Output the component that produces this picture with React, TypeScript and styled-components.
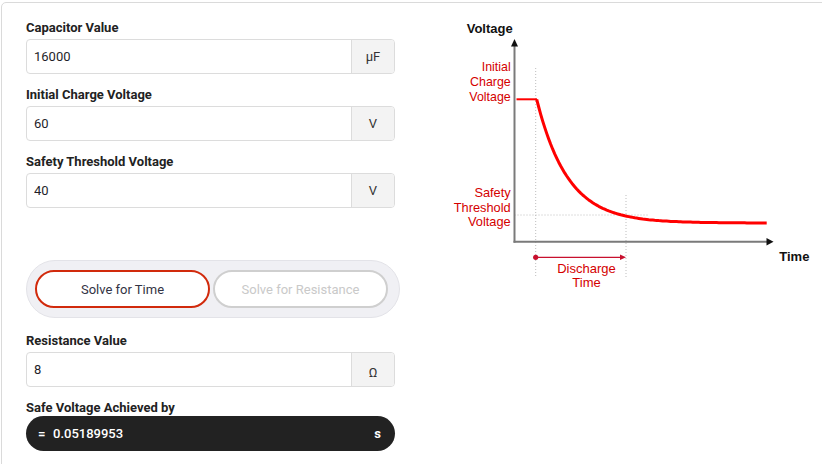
import React from "react";
import styled, { createGlobalStyle } from "styled-components";

const Global = createGlobalStyle`
  html, body {
    margin: 0;
    padding: 0;
    background: #ffffff;
    overflow: hidden;
  }
  * { box-sizing: border-box; }
`;

const Page = styled.div`
  padding: 2px 0 0 1px;
  width: 822px;
  height: 464px;
  overflow: hidden;
`;

const Card = styled.div`
  width: 1000px;
  min-height: 600px;
  border: 1px solid #dadada;
  border-radius: 5px;
  padding: 17px 0 0 24px;
  display: flex;
  align-items: flex-start;
  font-family: Roboto, "Liberation Sans", sans-serif;
  color: #222;
`;

const LeftColumn = styled.div`
  width: 369px;
  display: flex;
  flex-direction: column;
`;

const Field = styled.div<{ $mt?: number }>`
  display: flex;
  flex-direction: column;
  margin-top: ${(p) => p.$mt ?? 0}px;
`;

const Label = styled.label<{ $mb?: number }>`
  font-size: 13px;
  font-weight: 700;
  line-height: 16px;
  color: #222;
  margin-bottom: ${(p) => p.$mb ?? 3}px;
`;

const InputGroup = styled.div`
  display: flex;
  height: 35px;
  border: 1px solid #dcdcdc;
  border-radius: 4px;
  overflow: hidden;
  background: #fff;
`;

const ValueInput = styled.input`
  flex: 1;
  min-width: 0;
  border: none;
  outline: none;
  padding: 0 7px;
  font-family: Roboto, "Liberation Sans", sans-serif;
  font-size: 13px;
  color: #1f1f2a;
  background: transparent;
`;

const Unit = styled.div<{ $dy?: number }>`
  width: 43px;
  display: flex;
  align-items: center;
  justify-content: center;
  background: #f3f3f3;
  border-left: 1px solid #dcdcdc;
  font-size: 13px;
  color: #333;
  padding-top: ${(p) => p.$dy ?? 0}px;
`;

const Toggle = styled.div`
  width: 374px;
  height: 58px;
  margin-top: 52px;
  border: 1px solid #e3e3e8;
  border-radius: 29px;
  background: #f0f0f4;
  display: flex;
  align-items: center;
  gap: 3px;
  padding: 0 11px 0 8px;
`;

const ToggleButton = styled.button<{ $active?: boolean }>`
  flex: 1;
  height: 38px;
  border-radius: 19px;
  background: #fff;
  border: 2px solid ${(p) => (p.$active ? "#d12a0c" : "#cfcfcf")};
  color: ${(p) => (p.$active ? "#333344" : "#c9c9c9")};
  font-family: Roboto, "Liberation Sans", sans-serif;
  font-size: 13px;
  cursor: pointer;
  padding: 0;
`;

const Result = styled.div`
  height: 35px;
  border-radius: 18px;
  background: #222222;
  color: #fff;
  display: flex;
  align-items: center;
  padding: 0 14px 0 12px;
  font-size: 13px;
`;

const Equals = styled.span`
  font-weight: 700;
  width: 15px;
`;

const ResultValue = styled.span`
  flex: 1;
  font-weight: 500;
`;

const ResultUnit = styled.span`
  font-weight: 700;
`;

const ChartBox = styled.div`
  margin-left: 45px;
  width: 382px;
  height: 280px;
`;

const ChartSvg = styled.svg`
  display: block;
  font-family: "Liberation Sans", Arial, sans-serif;
`;

function curvePath() {
  const x0 = 96.7;
  const y0 = 79.3;
  const yInf = 203;
  const tau = 31;
  const pts: string[] = [];
  for (let x = x0; x <= 326.7; x += 2) {
    const y = yInf - (yInf - y0) * Math.exp(-(x - x0) / tau);
    pts.push(`${x.toFixed(1)},${y.toFixed(1)}`);
  }
  return "M" + pts.join(" L");
}

function Chart() {
  const red = "#d40000";
  return (
    <ChartSvg width="382" height="280" viewBox="0 0 382 280">
      <text x="26.7" y="12.7" fontSize="13" fontWeight="700" fill="#111">
        Voltage
      </text>
      <text x="339.3" y="241" fontSize="13" fontWeight="700" fill="#111">
        Time
      </text>

      {/* dotted guides */}
      <g stroke="#bdbdbd" strokeWidth="1" strokeDasharray="1 2" fill="none">
        <line x1="95.7" y1="48" x2="95.7" y2="257" />
        <line x1="186" y1="175" x2="186" y2="257" />
        <line x1="74.5" y1="195" x2="208" y2="195" />
      </g>

      {/* axes */}
      <line x1="74.5" y1="25" x2="74.5" y2="222.7" stroke="#7a7a7a" strokeWidth="2" />
      <polygon points="74.5,19 71,26.5 78,26.5" fill="#111" />
      <line x1="73.5" y1="221.7" x2="328" y2="221.7" stroke="#7a7a7a" strokeWidth="2" />
      <polygon points="333.5,221.7 326.5,218 326.5,225.4" fill="#111" />

      {/* curve */}
      <line x1="76.5" y1="79.3" x2="97" y2="79.3" stroke="#ff0000" strokeWidth="2" />
      <path d={curvePath()} stroke="#ff0000" strokeWidth="3" fill="none" strokeLinejoin="round" />

      {/* labels */}
      <g fill={red} fontSize="12.4" textAnchor="end">
        <text x="70.7" y="51">Initial</text>
        <text x="70.7" y="66">Charge</text>
        <text x="70.7" y="81">Voltage</text>
      </g>
      <g fill={red} fontSize="12.8" textAnchor="end">
        <text x="70.7" y="177">Safety</text>
        <text x="70.7" y="191.5">Threshold</text>
        <text x="70.7" y="206">Voltage</text>
      </g>

      {/* discharge arrow */}
      <circle cx="95.7" cy="237.3" r="2.6" fill="#c8102e" />
      <line x1="95.7" y1="237.3" x2="181" y2="237.3" stroke="#c8102e" strokeWidth="1.2" />
      <polygon points="186,237.3 180,234.6 180,240" fill="#c8102e" />
      <g fill={red} fontSize="13" textAnchor="middle">
        <text x="146.5" y="252.7">Discharge</text>
        <text x="146.5" y="267.3">Time</text>
      </g>
    </ChartSvg>
  );
}

export default function App() {
  return (
    <>
      <Global />
      <Page>
        <Card>
          <LeftColumn>
            <Field>
              <Label>Capacitor Value</Label>
              <InputGroup>
                <ValueInput defaultValue="16000" />
                <Unit>μF</Unit>
              </InputGroup>
            </Field>
            <Field $mt={13}>
              <Label>Initial Charge Voltage</Label>
              <InputGroup>
                <ValueInput defaultValue="60" />
                <Unit>V</Unit>
              </InputGroup>
            </Field>
            <Field $mt={13}>
              <Label>Safety Threshold Voltage</Label>
              <InputGroup>
                <ValueInput defaultValue="40" />
                <Unit>V</Unit>
              </InputGroup>
            </Field>

            <Toggle>
              <ToggleButton $active>Solve for Time</ToggleButton>
              <ToggleButton>Solve for Resistance</ToggleButton>
            </Toggle>

            <Field $mt={15}>
              <Label>Resistance Value</Label>
              <InputGroup>
                <ValueInput defaultValue="8" />
                <Unit $dy={5}>Ω</Unit>
              </InputGroup>
            </Field>
            <Field $mt={13}>
              <Label $mb={0}>Safe Voltage Achieved by</Label>
              <Result>
                <Equals>=</Equals>
                <ResultValue>0.05189953</ResultValue>
                <ResultUnit>s</ResultUnit>
              </Result>
            </Field>
          </LeftColumn>
          <ChartBox>
            <Chart />
          </ChartBox>
        </Card>
      </Page>
    </>
  );
}
